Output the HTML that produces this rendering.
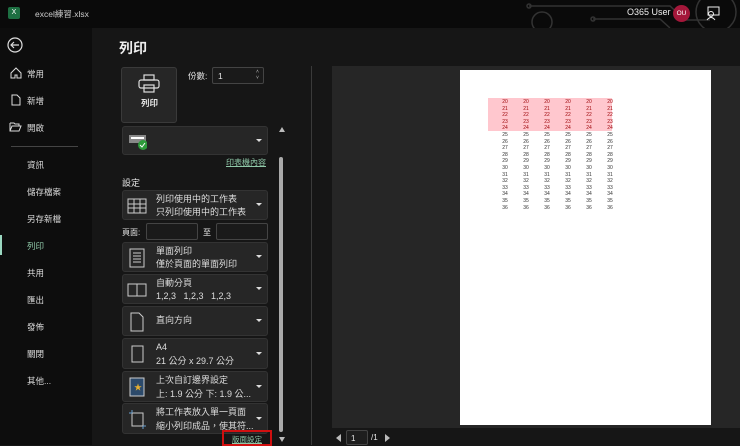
<!DOCTYPE html><html><head><meta charset="utf-8"><style>
*{margin:0;padding:0;box-sizing:border-box}
body{width:740px;height:445px;overflow:hidden;background:#161616;font-family:"Liberation Sans","Noto Sans CJK TC",sans-serif;color:#e6e6e6;position:relative;font-size:9px}
.a{position:absolute}
.nav{left:0;top:28px;width:92px;height:417px;background:#0d0d0d}
.ni{position:absolute;left:27px;font-size:8.5px;color:#ddd}
.dd{position:absolute;left:122px;width:146px;background:#262626;border:1px solid #333;border-radius:3px}
.dd .t{position:absolute;left:33px;font-size:9px;line-height:1.2;color:#ddd;white-space:nowrap}
.dd .arr{position:absolute;right:5px;top:50%;margin-top:-2px;border-left:3px solid transparent;border-right:3px solid transparent;border-top:3px solid #ddd}
.ic{position:absolute;left:4px;top:5px;width:20px;height:20px}
.c{position:absolute;font-size:5px;width:14px;text-align:center;color:#333}
</style></head><body>
<div class="a" style="left:0;top:0;width:740px;height:28px;background:#0a0a0a"></div>
<div class="a" style="left:8px;top:7px;width:12px;height:12px;background:#1d6f42;border-radius:2px;font-size:7px;color:#fff;text-align:center;line-height:12px">X</div>
<div class="a" style="left:35px;top:8px;font-size:8.5px;color:#ccc">excel練習.xlsx</div>
<svg class="a" style="left:520px;top:0" width="220" height="28"><g stroke="#333" fill="none" stroke-width="1.5"><path d="M9 6H150L165 20H190"/><path d="M73 19H140L150 28"/><circle cx="9" cy="6" r="2"/><circle cx="73" cy="19" r="2"/><circle cx="22" cy="22" r="10"/><circle cx="196" cy="12" r="20"/></g></svg>
<div class="a" style="left:627px;top:7px;font-size:9px;color:#eee">O365 User</div>
<div class="a" style="left:673px;top:5px;width:17px;height:17px;border-radius:50%;background:#a4173a;font-size:6.5px;color:#fff;text-align:center;line-height:17px">OU</div>
<svg class="a" style="left:705px;top:5px" width="16" height="16" stroke="#eee" fill="none"><rect x="3" y="2" width="11" height="8"/><circle cx="6" cy="9" r="2.5"/><path d="M2 15q4-5 8 0"/></svg>
<div class="a nav"></div>
<svg class="a" style="left:7px;top:37px" width="16" height="16" stroke="#ddd" fill="none" stroke-width="1.2"><circle cx="8" cy="8" r="7"/><path d="M12 8H4M7 5L4 8L7 11"/></svg>
<svg class="a" style="left:10px;top:67px" width="12" height="12" stroke="#ddd" fill="none"><path d="M1 6L6 1L11 6V11H7V8H5V11H1Z"/></svg>
<svg class="a" style="left:10px;top:94px" width="12" height="12" stroke="#ddd" fill="none"><path d="M2 1H7L10 4V11H2Z"/></svg>
<svg class="a" style="left:9px;top:121px" width="13" height="12" stroke="#ddd" fill="none"><path d="M1 2H5L6 3H10V5M1 2V10H10L12 5H3L1 10"/></svg>
<div class="ni" style="left:27px;top:68px">常用</div><div class="ni" style="left:27px;top:95px">新增</div><div class="ni" style="left:27px;top:122px">開啟</div>
<div class="a" style="left:11px;top:146px;width:67px;height:1px;background:#444"></div>
<div class="ni" style="top:159px">資訊</div><div class="ni" style="top:186px">儲存檔案</div><div class="ni" style="top:213px">另存新檔</div>
<div class="a" style="left:0;top:235px;width:2px;height:20px;background:#9ad7c0"></div>
<div class="ni" style="top:240px;color:#8fc8a8">列印</div><div class="ni" style="top:267px">共用</div><div class="ni" style="top:294px">匯出</div><div class="ni" style="top:321px">發佈</div><div class="ni" style="top:348px">關閉</div><div class="ni" style="top:375px">其他...</div>
<div class="a" style="left:119px;top:38px;font-size:14px;font-weight:bold;color:#eee">列印</div>
<div class="a" style="left:121px;top:67px;width:56px;height:56px;background:#262626;border:1px solid #3a3a3a;border-radius:3px"></div>
<svg class="a" style="left:138px;top:74px" width="22" height="20" stroke="#ddd" fill="none" stroke-width="1.2"><rect x="6" y="1" width="10" height="5"/><rect x="1" y="6" width="20" height="8" rx="2"/><rect x="6" y="11" width="10" height="7"/></svg>
<div class="a" style="left:141px;top:97px;font-size:8.5px;font-weight:bold">列印</div>
<div class="a" style="left:188px;top:70px;font-size:8.5px">份數:</div>
<div class="a" style="left:212px;top:67px;width:52px;height:17px;background:#1a1a1a;border:1px solid #444;border-radius:2px;font-size:8.5px;padding:3px 5px">1</div>
<div class="a" style="left:256px;top:69px;font-size:5px;color:#bbb;line-height:6px">˄<br>˅</div>
<div class="dd" style="top:126px;height:29px"><svg class="ic" style="top:3px" width="22" height="22"><rect x="2" y="5" width="17" height="8" fill="#888"/><rect x="4" y="7" width="13" height="2" fill="#fff"/><circle cx="16" cy="15" r="5" fill="#2d9b3a"/><path d="M13 15l2 2 3-4" stroke="#fff" fill="none"/></svg><div class="arr"></div></div>
<div class="a" style="left:226px;top:157px;font-size:8px;color:#8fc8a8;text-decoration:underline">印表機內容</div>
<div class="a" style="left:122px;top:176px;font-size:9px">設定</div>
<div class="dd" style="top:190px;height:30px"><svg class="ic" stroke="#ccc" fill="none"><rect x="1" y="3" width="18" height="14"/><path d="M1 8H19M1 12H19M7 3V17M13 3V17"/></svg><div class="t" style="top:3px">列印使用中的工作表</div><div class="t" style="top:16px">只列印使用中的工作表</div><div class="arr"></div></div>
<div class="a" style="left:122px;top:227px;font-size:8px">頁面:</div>
<div class="a" style="left:146px;top:223px;width:52px;height:17px;background:#1a1a1a;border:1px solid #444;border-radius:2px"></div>
<div class="a" style="left:203px;top:227px;font-size:8px">至</div>
<div class="a" style="left:216px;top:223px;width:52px;height:17px;background:#1a1a1a;border:1px solid #444;border-radius:2px"></div>
<div class="dd" style="top:242px;height:30px"><svg class="ic" stroke="#ccc" fill="none"><rect x="3" y="1" width="14" height="18"/><path d="M6 5H14M6 8H14M6 11H14M6 14H14"/></svg><div class="t" style="top:3px">單面列印</div><div class="t" style="top:16px">僅於頁面的單面列印</div><div class="arr"></div></div>
<div class="dd" style="top:274px;height:30px"><svg class="ic" stroke="#ccc" fill="none"><rect x="1" y="4" width="18" height="12"/><path d="M10 4V16"/></svg><div class="t" style="top:3px">自動分頁</div><div class="t" style="top:16px">1,2,3&nbsp;&nbsp;&nbsp;1,2,3&nbsp;&nbsp;&nbsp;1,2,3</div><div class="arr"></div></div>
<div class="dd" style="top:306px;height:30px"><svg class="ic" stroke="#ccc" fill="none"><path d="M4 1H12L16 5V19H4Z"/></svg><div class="t" style="top:8px">直向方向</div><div class="arr"></div></div>
<div class="dd" style="top:338px;height:31px"><svg class="ic" stroke="#ccc" fill="none"><rect x="5" y="2" width="11" height="16"/></svg><div class="t" style="top:3px">A4</div><div class="t" style="top:17px">21 公分 x 29.7 公分</div><div class="arr"></div></div>
<div class="dd" style="top:371px;height:31px"><svg class="ic" fill="none"><rect x="3" y="1" width="14" height="18" fill="#2c4a6b" stroke="#ccc"/><text x="7" y="13" font-size="8" fill="#e8b030">★</text></svg><div class="t" style="top:3px">上次自訂邊界設定</div><div class="t" style="top:17px">上: 1.9 公分 下: 1.9 公...</div><div class="arr"></div></div>
<div class="dd" style="top:403px;height:31px"><svg class="ic" stroke="#ccc" fill="none"><rect x="5" y="4" width="11" height="13"/><path d="M2 4H5M5 1V4M16 17V20M16 17H19" stroke="#6aa0d0"/></svg><div class="t" style="top:3px">將工作表放入單一頁面</div><div class="t" style="top:17px">縮小列印成品，使其符...</div><div class="arr"></div></div>
<div class="a" style="left:222px;top:430px;width:50px;height:16px;border:2px solid #d01010"></div>
<div class="a" style="left:232px;top:434px;font-size:7.5px;color:#8fc8a8;text-decoration:underline">版面設定</div>
<div class="a" style="left:279px;top:127px;border-left:3px solid transparent;border-right:3px solid transparent;border-bottom:5px solid #bbb"></div>
<div class="a" style="left:279px;top:157px;width:4px;height:275px;background:#aaa;border-radius:2px"></div>
<div class="a" style="left:279px;top:437px;border-left:3px solid transparent;border-right:3px solid transparent;border-top:5px solid #bbb"></div>
<div class="a" style="left:311px;top:66px;width:1px;height:379px;background:#3a3a3a"></div>
<div class="a" style="left:332px;top:66px;width:408px;height:362px;background:#262626"></div>
<div class="a" style="left:460px;top:70px;width:251px;height:355px;background:#fff"></div>
<div class="a" style="left:488px;top:98px;width:124px;height:33px;background:#ffc7ce"></div>
<div id="tb"></div>
<div class="a" style="left:336px;top:434px;border-top:4px solid transparent;border-bottom:4px solid transparent;border-right:5px solid #bbb"></div>
<div class="a" style="left:346px;top:430px;width:22px;height:15px;background:#1e1e1e;border:1px solid #444;border-radius:2px;font-size:8px;padding:3px 4px">1</div>
<div class="a" style="left:371px;top:433px;font-size:8px">/1</div>
<div class="a" style="left:385px;top:434px;border-top:4px solid transparent;border-bottom:4px solid transparent;border-left:5px solid #bbb"></div>
<script>
var h='';for(var r=0;r<17;r++){var n=20+r;var col=r<5?'#9c0006':'#333';for(var c=0;c<6;c++){h+='<div class="c" style="left:'+(498+c*21)+'px;top:'+(99+r*6.6)+'px;color:'+col+'">'+n+'</div>'}}document.getElementById('tb').innerHTML=h;
</script>
</body></html>
